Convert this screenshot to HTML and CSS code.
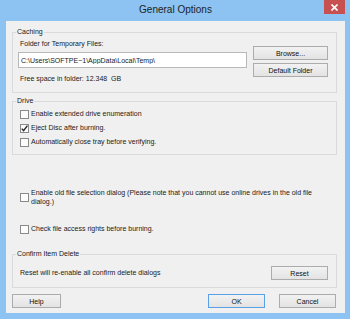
FILE: index.html
```html
<!DOCTYPE html>
<html lang="en">
<head>
    <meta charset="UTF-8">
    <title>General Options</title>
    <link rel="stylesheet" href="styles.css">
</head>
<body>
    <div class="window">
        <div class="titlebar">
            <span></span>
            <span class="title">General Options</span>
            <button class="close" aria-label="Close">
                <svg width="7" height="7" viewBox="0 0 7 7"><path d="M0.5 0.5L6.5 6.5M6.5 0.5L0.5 6.5" stroke="#fff" stroke-width="1.6"/></svg>
            </button>
        </div>
        <div class="content">
            <fieldset class="group caching">
                <legend>Caching</legend>
                <div class="caching-grid">
                    <div class="folder-col">
                        <div class="text">Folder for Temporary Files:</div>
                        <input class="path" type="text" value="C:\Users\SOFTPE~1\AppData\Local\Temp\">
                        <div class="text free">Free space in folder: 12.348&nbsp; GB</div>
                    </div>
                    <div class="button-col">
                        <button class="btn">Browse...</button>
                        <button class="btn">Default Folder</button>
                    </div>
                </div>
            </fieldset>

            <fieldset class="group drive">
                <legend>Drive</legend>
                <label class="check-row"><span class="box"></span>Enable extended drive enumeration</label>
                <label class="check-row"><span class="box checked"><svg width="9" height="9" viewBox="0 0 9 9"><path d="M1.8 4.6L3.6 6.6L7.4 1.6" fill="none" stroke="#222" stroke-width="1.4"/></svg></span>Eject Disc after burning.</label>
                <label class="check-row"><span class="box"></span>Automatically close tray before verifying.</label>
            </fieldset>

            <div class="loose">
                <label class="check-row wide"><span class="box"></span><span>Enable old file selection dialog (Please note that you cannot use online drives in the old file dialog.)</span></label>
                <label class="check-row access"><span class="box"></span>Check file access rights before burning.</label>
            </div>

            <fieldset class="group confirm">
                <legend>Confirm Item Delete</legend>
                <div class="confirm-row">
                    <span class="text">Reset will re-enable all confirm delete dialogs</span>
                    <button class="btn reset">Reset</button>
                </div>
            </fieldset>

            <div class="footer">
                <button class="btn help">Help</button>
                <div class="footer-right">
                    <button class="btn ok">OK</button>
                    <button class="btn cancel">Cancel</button>
                </div>
            </div>
        </div>
    </div>
</body>
</html>
```

FILE: styles.css
```css
body, html {
    margin: 0;
    padding: 0;
    font-family: 'Liberation Sans', Arial, sans-serif;
    font-size: 7px;
    color: #1a1a1a;
}
.window {
    width: 350px;
    height: 319px;
    box-sizing: border-box;
    background-color: #8cc3f2;
    padding: 0 5px 6px 6px;
    display: flex;
    flex-direction: column;
}
.titlebar {
    height: 21px;
    display: grid;
    grid-template-columns: 1fr auto 1fr;
    align-items: start;
}
.title {
    font-size: 10px;
    line-height: 12px;
    margin-top: 4px;
    color: #222;
}
.close {
    justify-self: end;
    width: 21px;
    height: 14px;
    border: none;
    padding: 0;
    background-color: #c75050;
    display: flex;
    align-items: center;
    justify-content: center;
}
.content {
    flex: 1;
    background-color: #f0f0f0;
    padding: 7px 8px 0 6px;
}
.group {
    margin: 0;
    border: 1px solid #dadada;
    padding: 0 8px 0 5px;
}
.group legend {
    padding: 0 1px;
    margin-left: -2px;
    line-height: 8px;
}
.text {
    line-height: 8px;
    padding-left: 2px;
}
.caching {
    padding-top: 4px;
    padding-bottom: 9px;
}
.caching-grid {
    display: grid;
    grid-template-columns: 1fr 75px;
    column-gap: 6px;
}
.path {
    display: block;
    box-sizing: border-box;
    width: 100%;
    height: 16px;
    margin-top: 4px;
    border: 1px solid #b8b8b8;
    background-color: #fff;
    font-family: inherit;
    font-size: 7px;
    padding: 0 2px;
    color: #1a1a1a;
}
.free {
    margin-top: 7px;
}
.button-col {
    display: flex;
    flex-direction: column;
    gap: 3px;
    padding-top: 6px;
}
.btn {
    box-sizing: border-box;
    height: 14px;
    padding: 0;
    border: 1px solid #acacac;
    background: linear-gradient(#f2f2f2, #e3e3e3);
    font-family: inherit;
    font-size: 7px;
    color: #111;
}
.drive {
    margin-top: 4px;
    padding-top: 2px;
    padding-bottom: 5px;
}
.check-row {
    display: flex;
    align-items: center;
    gap: 2px;
    height: 14px;
    padding-left: 2px;
    line-height: 8px;
}
.box {
    flex: none;
    box-sizing: border-box;
    width: 9px;
    height: 9px;
    border: 1px solid #8a8a8a;
    background-color: #fcfcfc;
    position: relative;
}
.box svg {
    position: absolute;
    left: -1px;
    top: -1px;
}
.loose {
    margin-top: 33px;
    padding-left: 6px;
    width: 305px;
}
.check-row.wide {
    height: 18px;
    line-height: 9px;
}
.check-row.access {
    margin-top: 16px;
}
.confirm {
    margin-top: 14px;
    padding-top: 8px;
    padding-bottom: 7px;
}
.confirm-row {
    display: flex;
    justify-content: space-between;
    align-items: center;
}
.reset {
    width: 57px;
}
.footer {
    display: flex;
    justify-content: space-between;
    margin-top: 6px;
    padding-right: 1px;
}
.help {
    width: 49px;
}
.footer-right {
    display: flex;
    gap: 14px;
}
.ok, .cancel {
    width: 57px;
}
.ok {
    border-color: #5aa0e6;
}
```
